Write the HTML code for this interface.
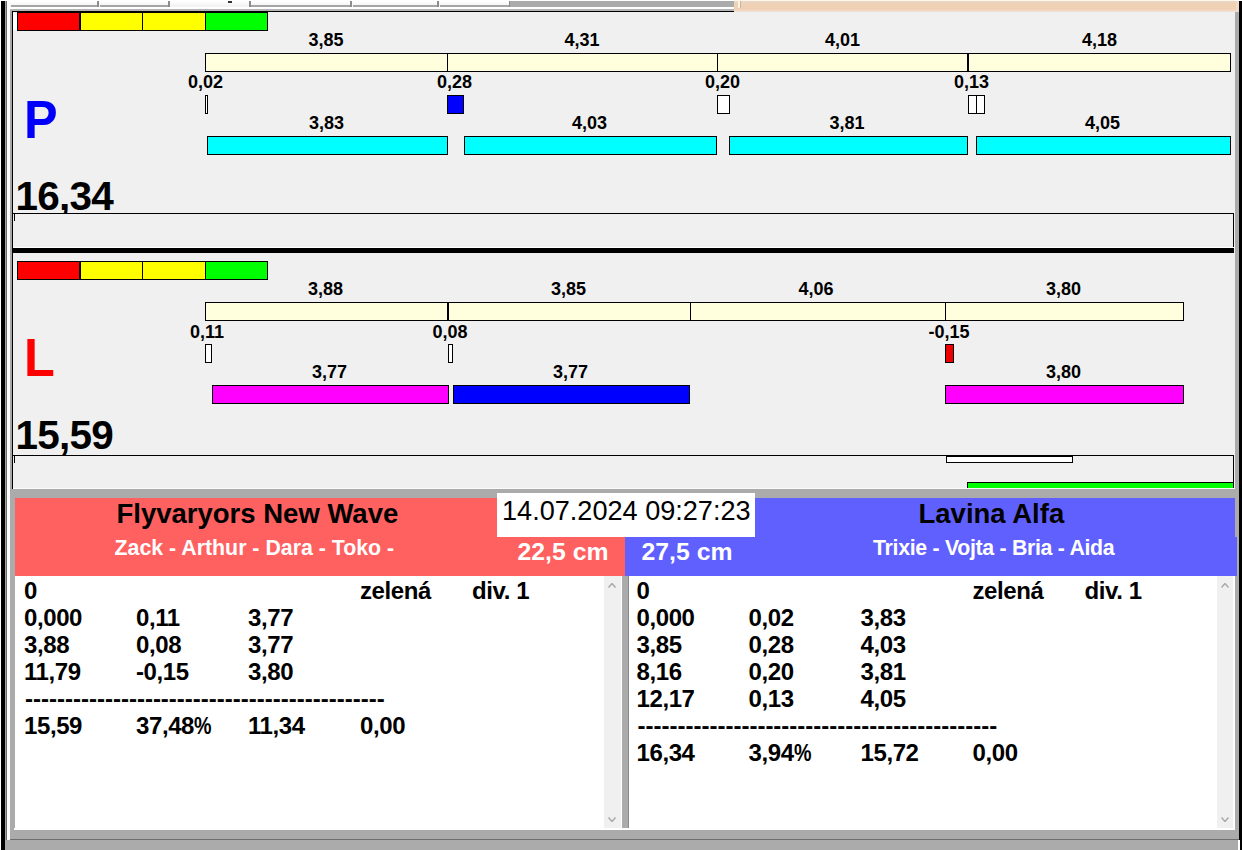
<!DOCTYPE html>
<html><head><meta charset="utf-8"><title>Flyball</title>
<style>
html,body{margin:0;padding:0;}
body{width:1242px;height:850px;position:relative;overflow:hidden;background:#fff;font-family:"Liberation Sans",Arial,sans-serif;}
.b{position:absolute;box-sizing:border-box;}
.t{position:absolute;white-space:pre;line-height:1;font-weight:bold;}
.t.r{font-weight:normal;}
.pc{display:inline-block;transform:scaleX(0.82);transform-origin:0 50%;}
</style></head><body>
<div class="b" style="left:0px;top:0px;width:1242px;height:850px;background:#fff;"></div>
<div class="b" style="left:1px;top:1px;width:4px;height:849px;background:#000;"></div>
<div class="b" style="left:5px;top:1px;width:1px;height:849px;background:#a4a4a4;"></div>
<div class="b" style="left:6px;top:1px;width:1px;height:849px;background:#6c6c6c;"></div>
<div class="b" style="left:7px;top:1px;width:3px;height:849px;background:#fff;"></div>
<div class="b" style="left:10px;top:1px;width:724px;height:6px;background:linear-gradient(#fff 0px,#fafafa 2px,#f2f2f2 5px);"></div>
<div class="b" style="left:11px;top:5px;width:87px;height:2px;background:#a6a6a6;"></div>
<div class="b" style="left:97px;top:1px;width:2px;height:6px;background:#8c8c8c;"></div>
<div class="b" style="left:100px;top:5px;width:69px;height:2px;background:#a6a6a6;"></div>
<div class="b" style="left:168px;top:1px;width:2px;height:6px;background:#8c8c8c;"></div>
<div class="b" style="left:251px;top:5px;width:100px;height:2px;background:#a6a6a6;"></div>
<div class="b" style="left:350px;top:1px;width:2px;height:6px;background:#8c8c8c;"></div>
<div class="b" style="left:353px;top:5px;width:85px;height:2px;background:#a6a6a6;"></div>
<div class="b" style="left:437px;top:1px;width:2px;height:6px;background:#8c8c8c;"></div>
<div class="b" style="left:440px;top:5px;width:70px;height:2px;background:#a6a6a6;"></div>
<div class="b" style="left:509px;top:1px;width:2px;height:6px;background:#8c8c8c;"></div>
<div class="b" style="left:249px;top:1px;width:2px;height:6px;background:#8c8c8c;"></div>
<div class="b" style="left:228px;top:1px;width:4px;height:2px;background:#333;"></div>
<div class="b" style="left:510px;top:1px;width:224px;height:6px;background:#ababab;"></div>
<div class="b" style="left:10px;top:7px;width:724px;height:2px;background:#fff;"></div>
<div class="b" style="left:10px;top:9px;width:724px;height:2px;background:#b4b4b4;"></div>
<div class="b" style="left:734px;top:1px;width:502px;height:12px;background:linear-gradient(#ecd8c8 0px,#ecd2bc 2px,#f1d1b3 4px,#f1d1b3 8px,#f0dccb 10px,#f0ece8 12px);"></div>
<div class="b" style="left:734px;top:0px;width:502px;height:1px;background:#fdf6ea;"></div>
<div class="b" style="left:738px;top:0px;width:2px;height:8px;background:#fff4e4;"></div>
<div class="b" style="left:740px;top:1px;width:1px;height:7px;background:#c9b39e;"></div>
<div class="b" style="left:10px;top:11px;width:2px;height:478px;background:#a8a8a8;"></div>
<div class="b" style="left:12px;top:11px;width:1px;height:478px;background:#000;"></div>
<div class="b" style="left:13px;top:12px;width:1222px;height:477px;background:#f0f0f0;"></div>
<div class="b" style="left:13px;top:11px;width:721px;height:1px;background:#000;"></div>
<div class="b" style="left:1235px;top:12px;width:4px;height:828px;background:#ababab;"></div>
<div class="b" style="left:1239px;top:1px;width:3px;height:849px;background:#000;"></div>
<div class="b" style="left:1236px;top:1px;width:3px;height:11px;background:#f3dcc6;"></div>
<div class="b" style="left:13px;top:13px;width:4px;height:17px;background:#fff;"></div>
<div class="b" style="left:17px;top:12px;width:64px;height:19px;background:#ff0000;border:1px solid #000;border-right-width:2px;"></div>
<div class="b" style="left:80px;top:12px;width:63px;height:19px;background:#ffff00;border:1px solid #000;"></div>
<div class="b" style="left:142px;top:12px;width:64px;height:19px;background:#ffff00;border:1px solid #000;"></div>
<div class="b" style="left:205px;top:12px;width:63px;height:19px;background:#00ff00;border:1px solid #000;"></div>
<div class="b" style="left:205px;top:53px;width:1026px;height:19px;background:#ffffde;border:1px solid #000;"></div>
<div class="b" style="left:447px;top:53px;width:1px;height:19px;background:#000;"></div>
<div class="b" style="left:717px;top:53px;width:1px;height:19px;background:#000;"></div>
<div class="b" style="left:967px;top:53px;width:2px;height:19px;background:#000;"></div>
<div class="t" style="left:308.5px;top:31.26px;font-size:18px;color:#000;">3,85</div>
<div class="t" style="left:564.5px;top:31.26px;font-size:18px;color:#000;">4,31</div>
<div class="t" style="left:825.0px;top:31.26px;font-size:18px;color:#000;">4,01</div>
<div class="t" style="left:1082.0px;top:31.26px;font-size:18px;color:#000;">4,18</div>
<div class="t" style="left:188.0px;top:73.36px;font-size:18px;color:#000;">0,02</div>
<div class="t" style="left:437.0px;top:73.36px;font-size:18px;color:#000;">0,28</div>
<div class="t" style="left:705.0px;top:73.36px;font-size:18px;color:#000;">0,20</div>
<div class="t" style="left:954.0px;top:73.36px;font-size:18px;color:#000;">0,13</div>
<div class="b" style="left:205px;top:95px;width:3px;height:19px;background:#fff;border:1px solid #000;"></div>
<div class="b" style="left:447px;top:95px;width:17px;height:19px;background:#0000ff;border:1px solid #000;"></div>
<div class="b" style="left:717px;top:95px;width:13px;height:19px;background:#fff;border:1px solid #000;"></div>
<div class="b" style="left:968px;top:95px;width:9px;height:19px;background:#fff;border:1px solid #000;"></div>
<div class="b" style="left:976px;top:95px;width:9px;height:19px;background:#fff;border:1px solid #000;"></div>
<div class="b" style="left:207px;top:136px;width:241px;height:19px;background:#00ffff;border:1px solid #000;"></div>
<div class="b" style="left:464px;top:136px;width:253px;height:19px;background:#00ffff;border:1px solid #000;"></div>
<div class="b" style="left:729px;top:136px;width:239px;height:19px;background:#00ffff;border:1px solid #000;"></div>
<div class="b" style="left:976px;top:136px;width:255px;height:19px;background:#00ffff;border:1px solid #000;"></div>
<div class="t" style="left:309.0px;top:114.26px;font-size:18px;color:#000;">3,83</div>
<div class="t" style="left:572.0px;top:114.26px;font-size:18px;color:#000;">4,03</div>
<div class="t" style="left:829.5px;top:114.26px;font-size:18px;color:#000;">3,81</div>
<div class="t" style="left:1085.0px;top:114.26px;font-size:18px;color:#000;">4,05</div>
<div class="t" style="left:24.0px;top:92.53px;font-size:53.6px;color:#0000fa;transform:scaleX(.94);transform-origin:0 0;">P</div>
<div class="t" style="left:15.5px;top:175.72px;font-size:40.5px;color:#000;letter-spacing:-0.75px;">16,34</div>
<div class="b" style="left:13px;top:214px;width:1220px;height:33px;background:#f0f0f0;"></div>
<div class="b" style="left:13px;top:213px;width:1221px;height:1px;background:#000;"></div>
<div class="b" style="left:1233px;top:213px;width:1px;height:34px;background:#000;"></div>
<div class="b" style="left:14px;top:213px;width:1px;height:8px;background:#000;"></div>
<div class="b" style="left:13px;top:247px;width:1222px;height:1px;background:#fff;"></div>
<div class="b" style="left:13px;top:248px;width:1221px;height:5px;background:#000;"></div>
<div class="b" style="left:17px;top:261px;width:64px;height:19px;background:#ff0000;border:1px solid #000;border-right-width:2px;"></div>
<div class="b" style="left:80px;top:261px;width:63px;height:19px;background:#ffff00;border:1px solid #000;"></div>
<div class="b" style="left:142px;top:261px;width:64px;height:19px;background:#ffff00;border:1px solid #000;"></div>
<div class="b" style="left:205px;top:261px;width:63px;height:19px;background:#00ff00;border:1px solid #000;"></div>
<div class="b" style="left:205px;top:302px;width:979px;height:19px;background:#ffffde;border:1px solid #000;"></div>
<div class="b" style="left:447px;top:302px;width:2px;height:19px;background:#000;"></div>
<div class="b" style="left:690px;top:302px;width:1px;height:19px;background:#000;"></div>
<div class="b" style="left:945px;top:302px;width:1px;height:19px;background:#000;"></div>
<div class="t" style="left:308.0px;top:280.26px;font-size:18px;color:#000;">3,88</div>
<div class="t" style="left:551.0px;top:280.26px;font-size:18px;color:#000;">3,85</div>
<div class="t" style="left:798.5px;top:280.26px;font-size:18px;color:#000;">4,06</div>
<div class="t" style="left:1046.0px;top:280.26px;font-size:18px;color:#000;">3,80</div>
<div class="t" style="left:190.0px;top:322.76px;font-size:18px;color:#000;">0,11</div>
<div class="t" style="left:432.5px;top:322.76px;font-size:18px;color:#000;">0,08</div>
<div class="t" style="left:928.5px;top:322.76px;font-size:18px;color:#000;">-0,15</div>
<div class="b" style="left:205px;top:344px;width:7px;height:19px;background:#fff;border:1px solid #000;"></div>
<div class="b" style="left:448px;top:344px;width:5px;height:19px;background:#fff;border:1px solid #000;"></div>
<div class="b" style="left:945px;top:344px;width:9px;height:19px;background:#ee0000;border:1px solid #000;"></div>
<div class="b" style="left:212px;top:385px;width:237px;height:19px;background:#ff00ff;border:1px solid #000;"></div>
<div class="b" style="left:453px;top:385px;width:237px;height:19px;background:#0000ff;border:1px solid #000;"></div>
<div class="b" style="left:945px;top:385px;width:239px;height:19px;background:#ff00ff;border:1px solid #000;"></div>
<div class="t" style="left:312.0px;top:363.26px;font-size:18px;color:#000;">3,77</div>
<div class="t" style="left:553.0px;top:363.26px;font-size:18px;color:#000;">3,77</div>
<div class="t" style="left:1046.0px;top:363.26px;font-size:18px;color:#000;">3,80</div>
<div class="t" style="left:24.0px;top:330.53px;font-size:53.6px;color:#ff0000;transform:scaleX(.94);transform-origin:0 0;">L</div>
<div class="t" style="left:15.5px;top:415.22px;font-size:40.5px;color:#000;letter-spacing:-0.75px;">15,59</div>
<div class="b" style="left:13px;top:456px;width:1220px;height:33px;background:#f0f0f0;"></div>
<div class="b" style="left:13px;top:455px;width:1221px;height:1px;background:#000;"></div>
<div class="b" style="left:1233px;top:455px;width:1px;height:33px;background:#000;"></div>
<div class="b" style="left:14px;top:455px;width:1px;height:8px;background:#000;"></div>
<div class="b" style="left:946px;top:455px;width:127px;height:8px;background:#fff;border:1px solid #000;border-top-width:2px;"></div>
<div class="b" style="left:13px;top:488px;width:1222px;height:1px;background:#fbfbfb;"></div>
<div class="b" style="left:967px;top:482px;width:267px;height:6px;background:#00ff00;border:1px solid #000;border-bottom:0;"></div>
<div class="b" style="left:10px;top:489px;width:1229px;height:9px;background:#ababab;"></div>
<div class="b" style="left:10px;top:498px;width:5px;height:342px;background:#ababab;"></div>
<div class="b" style="left:15px;top:498px;width:610px;height:78px;background:#ff6060;"></div>
<div class="b" style="left:625px;top:498px;width:610px;height:78px;background:#6060ff;"></div>
<div class="b" style="left:1235px;top:537px;width:2px;height:39px;background:#6060ff;"></div>
<div class="b" style="left:497px;top:493px;width:258px;height:44px;background:#fff;"></div>
<div class="t r" style="left:502.0px;top:496.76px;font-size:27.1px;color:#000;">14.07.2024 09:27:23</div>
<div class="t" style="left:116.5px;top:499.82px;font-size:27.5px;color:#000;">Flyvaryors New Wave</div>
<div class="t" style="left:114.5px;top:538.34px;font-size:21.33px;color:#fff;">Zack - Arthur - Dara - Toko -</div>
<div class="t" style="left:918.5px;top:499.82px;font-size:27.5px;color:#000;">Lavina Alfa</div>
<div class="t" style="left:873.0px;top:538.14px;font-size:21.33px;color:#fff;letter-spacing:-0.31px;">Trixie - Vojta - Bria - Aida</div>
<div class="t" style="left:517.5px;top:539.51px;font-size:24.8px;color:#fff;">22,5 cm</div>
<div class="t" style="left:641.5px;top:539.51px;font-size:24.8px;color:#fff;">27,5 cm</div>
<div class="b" style="left:15px;top:576px;width:589px;height:252px;background:#fff;"></div>
<div class="b" style="left:604px;top:576px;width:17px;height:252px;background:#f0f0f0;"></div>
<div class="b" style="left:621px;top:576px;width:1px;height:252px;background:#fff;"></div>
<div class="b" style="left:622px;top:576px;width:7px;height:254px;background:#ababab;"></div>
<div class="b" style="left:628px;top:576px;width:1px;height:252px;background:#8a8a8a;"></div>
<div class="b" style="left:629px;top:576px;width:588px;height:252px;background:#fff;"></div>
<div class="b" style="left:1217px;top:576px;width:16px;height:252px;background:#f0f0f0;"></div>
<div class="b" style="left:1233px;top:576px;width:2px;height:252px;background:#fff;"></div>
<div class="b" style="left:14px;top:828px;width:1221px;height:2px;background:#fff;"></div>
<div class="b" style="left:10px;top:830px;width:1229px;height:9px;background:#ababab;"></div>
<div class="b" style="left:10px;top:839px;width:1229px;height:1px;background:#6e6e6e;"></div>
<div class="b" style="left:5px;top:840px;width:1234px;height:10px;background:#ababab;"></div>
<div class="b" style="left:1238px;top:840px;width:2px;height:10px;background:#fff;"></div>
<div class="t" style="left:24.0px;top:578.98px;font-size:24px;color:#000;letter-spacing:-0.4px;">0</div>
<div class="t" style="left:360.0px;top:578.98px;font-size:24px;color:#000;letter-spacing:-0.4px;">zelená</div>
<div class="t" style="left:472.0px;top:578.98px;font-size:24px;color:#000;letter-spacing:-0.4px;">div. 1</div>
<div class="t" style="left:24.0px;top:605.98px;font-size:24px;color:#000;letter-spacing:-0.4px;">0,000</div>
<div class="t" style="left:136.0px;top:605.98px;font-size:24px;color:#000;letter-spacing:-0.4px;">0,11</div>
<div class="t" style="left:248.0px;top:605.98px;font-size:24px;color:#000;letter-spacing:-0.4px;">3,77</div>
<div class="t" style="left:24.0px;top:632.98px;font-size:24px;color:#000;letter-spacing:-0.4px;">3,88</div>
<div class="t" style="left:136.0px;top:632.98px;font-size:24px;color:#000;letter-spacing:-0.4px;">0,08</div>
<div class="t" style="left:248.0px;top:632.98px;font-size:24px;color:#000;letter-spacing:-0.4px;">3,77</div>
<div class="t" style="left:24.0px;top:659.98px;font-size:24px;color:#000;letter-spacing:-0.4px;">11,79</div>
<div class="t" style="left:136.0px;top:659.98px;font-size:24px;color:#000;letter-spacing:-0.4px;">-0,15</div>
<div class="t" style="left:248.0px;top:659.98px;font-size:24px;color:#000;letter-spacing:-0.4px;">3,80</div>
<div class="t" style="left:25.0px;top:686.98px;font-size:24px;color:#000;">---------------------------------------------</div>
<div class="t" style="left:24.0px;top:713.98px;font-size:24px;color:#000;letter-spacing:-0.4px;">15,59</div>
<div class="t" style="left:136.0px;top:713.98px;font-size:24px;color:#000;letter-spacing:-0.4px;">37,48<span class="pc">%</span></div>
<div class="t" style="left:248.0px;top:713.98px;font-size:24px;color:#000;letter-spacing:-0.4px;">11,34</div>
<div class="t" style="left:360.0px;top:713.98px;font-size:24px;color:#000;letter-spacing:-0.4px;">0,00</div>
<div class="t" style="left:636.5px;top:578.98px;font-size:24px;color:#000;letter-spacing:-0.4px;">0</div>
<div class="t" style="left:972.5px;top:578.98px;font-size:24px;color:#000;letter-spacing:-0.4px;">zelená</div>
<div class="t" style="left:1084.5px;top:578.98px;font-size:24px;color:#000;letter-spacing:-0.4px;">div. 1</div>
<div class="t" style="left:636.5px;top:605.98px;font-size:24px;color:#000;letter-spacing:-0.4px;">0,000</div>
<div class="t" style="left:748.5px;top:605.98px;font-size:24px;color:#000;letter-spacing:-0.4px;">0,02</div>
<div class="t" style="left:860.5px;top:605.98px;font-size:24px;color:#000;letter-spacing:-0.4px;">3,83</div>
<div class="t" style="left:636.5px;top:632.98px;font-size:24px;color:#000;letter-spacing:-0.4px;">3,85</div>
<div class="t" style="left:748.5px;top:632.98px;font-size:24px;color:#000;letter-spacing:-0.4px;">0,28</div>
<div class="t" style="left:860.5px;top:632.98px;font-size:24px;color:#000;letter-spacing:-0.4px;">4,03</div>
<div class="t" style="left:636.5px;top:659.98px;font-size:24px;color:#000;letter-spacing:-0.4px;">8,16</div>
<div class="t" style="left:748.5px;top:659.98px;font-size:24px;color:#000;letter-spacing:-0.4px;">0,20</div>
<div class="t" style="left:860.5px;top:659.98px;font-size:24px;color:#000;letter-spacing:-0.4px;">3,81</div>
<div class="t" style="left:636.5px;top:686.98px;font-size:24px;color:#000;letter-spacing:-0.4px;">12,17</div>
<div class="t" style="left:748.5px;top:686.98px;font-size:24px;color:#000;letter-spacing:-0.4px;">0,13</div>
<div class="t" style="left:860.5px;top:686.98px;font-size:24px;color:#000;letter-spacing:-0.4px;">4,05</div>
<div class="t" style="left:637.5px;top:713.98px;font-size:24px;color:#000;">---------------------------------------------</div>
<div class="t" style="left:636.5px;top:740.98px;font-size:24px;color:#000;letter-spacing:-0.4px;">16,34</div>
<div class="t" style="left:748.5px;top:740.98px;font-size:24px;color:#000;letter-spacing:-0.4px;">3,94<span class="pc">%</span></div>
<div class="t" style="left:860.5px;top:740.98px;font-size:24px;color:#000;letter-spacing:-0.4px;">15,72</div>
<div class="t" style="left:972.5px;top:740.98px;font-size:24px;color:#000;letter-spacing:-0.4px;">0,00</div>
<svg class="b" style="left:608px;top:583px" width="8" height="5" viewBox="0 0 8 5"><polyline points="0.5,4.5 4,0.5 7.5,4.5" fill="none" stroke="#a6a6a6" stroke-width="1.4"/></svg>
<svg class="b" style="left:1221px;top:583px" width="8" height="5" viewBox="0 0 8 5"><polyline points="0.5,4.5 4,0.5 7.5,4.5" fill="none" stroke="#a6a6a6" stroke-width="1.4"/></svg>
<svg class="b" style="left:608px;top:817px" width="8" height="5" viewBox="0 0 8 5"><polyline points="0.5,0.5 4,4.5 7.5,0.5" fill="none" stroke="#a6a6a6" stroke-width="1.4"/></svg>
<svg class="b" style="left:1220.5px;top:817px" width="8" height="5" viewBox="0 0 8 5"><polyline points="0.5,0.5 4,4.5 7.5,0.5" fill="none" stroke="#a6a6a6" stroke-width="1.4"/></svg>
</body></html>
